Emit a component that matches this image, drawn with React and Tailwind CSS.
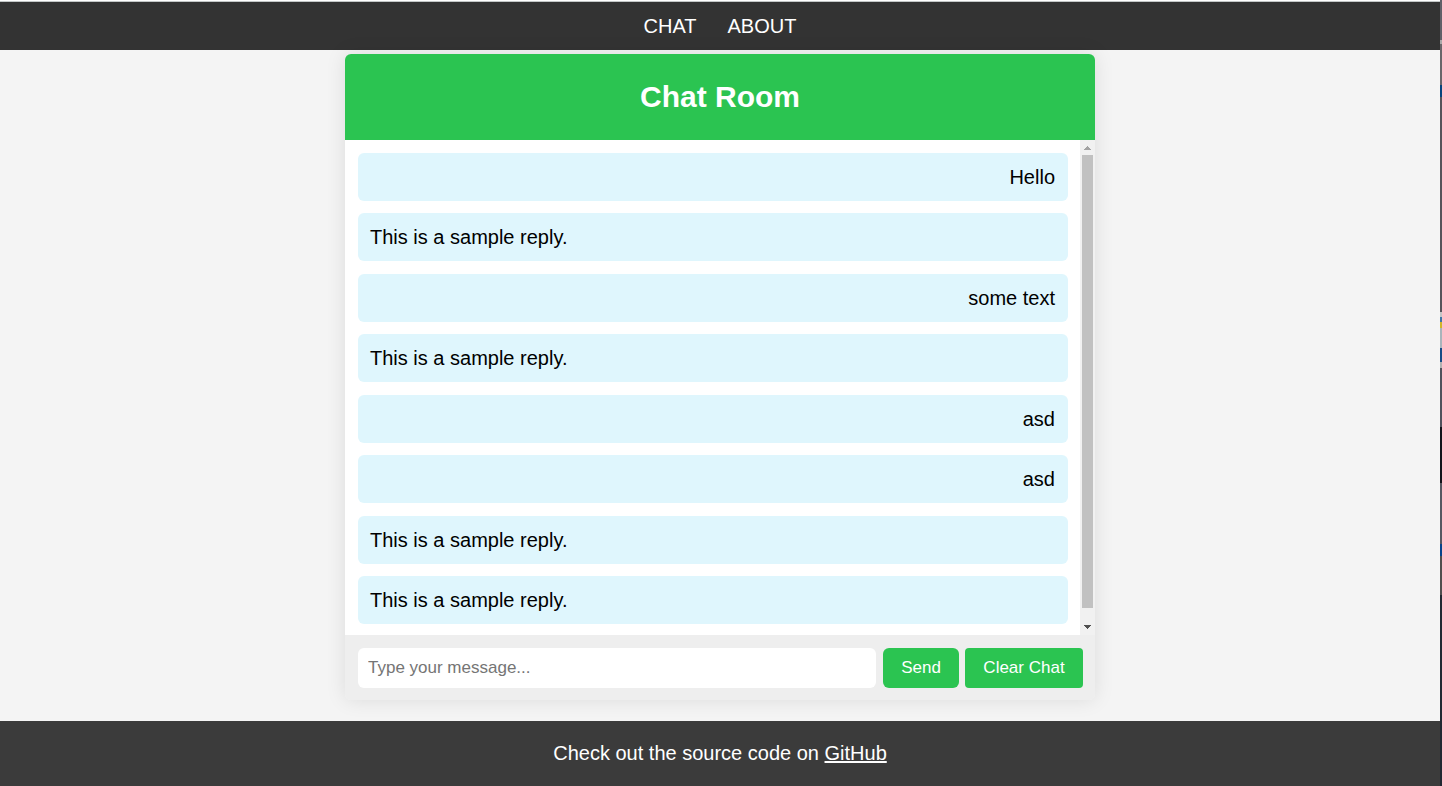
import React from "react";

const messages = [
  { text: "Hello", own: true },
  { text: "This is a sample reply.", own: false },
  { text: "some text", own: true },
  { text: "This is a sample reply.", own: false },
  { text: "asd", own: true },
  { text: "asd", own: true },
  { text: "This is a sample reply.", own: false },
  { text: "This is a sample reply.", own: false },
];

function Navigation() {
  return (
    <nav className="flex h-12 shrink-0 items-center justify-center gap-[31px] bg-[#333333] text-xl text-white">
      <a href="#chat">CHAT</a>
      <a href="#about">ABOUT</a>
    </nav>
  );
}

function ScrollTrack() {
  return (
    <div className="flex w-[15px] shrink-0 flex-col items-center bg-[#f1f1f1]" aria-hidden="true">
      <svg className="h-[15px] w-[15px] shrink-0" viewBox="0 0 15 15" shapeRendering="crispEdges">
        <path d="M7 6h1v1h1v1h1v1h1v1H4V9h1V8h1V7h1z" fill="#a3a3a3" />
      </svg>
      <div className="w-[11px] grow bg-[#c1c1c1]" />
      <div className="h-3 shrink-0" />
      <svg className="h-[15px] w-[15px] shrink-0" viewBox="0 0 15 15" shapeRendering="crispEdges">
        <path d="M4 5h7v1h-1v1H9v1H8v1H7V8H6V7H5V6H4z" fill="#505050" />
      </svg>
    </div>
  );
}

function MessageList() {
  return (
    <div className="flex h-[495px] bg-white">
      <ul className="flex grow flex-col justify-between pt-[13px] pr-3 pb-[11px] pl-[13px]">
        {messages.map((message, index) => (
          <li
            key={index}
            className={`rounded-md bg-[#dff6fd] py-[9px] pr-[13px] pl-3 text-xl leading-[30px] text-black ${
              message.own ? "text-right" : "text-left"
            }`}
          >
            {message.text}
          </li>
        ))}
      </ul>
      <ScrollTrack />
    </div>
  );
}

function Composer() {
  return (
    <form
      className="flex gap-[6px] bg-[#eeeeee] pt-[13px] pr-3 pb-3 pl-[13px] text-[17px]"
      onSubmit={(event) => event.preventDefault()}
    >
      <input
        type="text"
        aria-label="Message"
        placeholder="Type your message..."
        className="mr-px h-10 min-w-0 grow rounded-md bg-white px-[10px] text-black outline-none placeholder:text-[#757575]"
      />
      <button type="submit" className="h-10 w-[76px] shrink-0 rounded-md bg-[#2bc451] text-white">
        Send
      </button>
      <button type="button" className="h-10 w-[118px] shrink-0 rounded bg-[#2bc451] text-white">
        Clear Chat
      </button>
    </form>
  );
}

function DesktopEdge() {
  return (
    <div className="flex w-[2px] shrink-0 flex-col bg-[#45464d]" aria-hidden="true">
      <div className="h-10 bg-[#606068]" />
      <div className="h-1 bg-[#a8a8a8]" />
      <div className="h-[41px] bg-[#69666a]" />
      <div className="h-3 bg-[#07447d]" />
      <div className="h-[215px] bg-[#56535a]" />
      <div className="h-[5px] bg-[#c4c5c6]" />
      <div className="h-[5px] bg-[#3f75a4]" />
      <div className="h-[6px] bg-[#d1b629]" />
      <div className="h-5 bg-[#a9b4bb]" />
      <div className="h-[14px] bg-[#174b86]" />
      <div className="h-[6px] bg-[#b1b1b1]" />
      <div className="h-[59px] bg-[#50515c]" />
      <div className="h-14 bg-[#12131a]" />
      <div className="h-[61px] bg-[#565761]" />
      <div className="h-3 bg-[#07438b]" />
      <div className="h-[39px] bg-[#514e4e]" />
      <div className="grow bg-[#222832]" />
    </div>
  );
}

export default function App() {
  return (
    <div className="flex min-h-screen font-['Liberation_Sans',Arial,sans-serif]">
      <div className="flex min-w-0 grow flex-col border-t border-white bg-[#f4f4f4]">
        <div className="h-px shrink-0 bg-[#c3c7c7]" />
        <Navigation />
        <main className="flex grow flex-col items-center px-4 pt-1 pb-[21px]">
          <section className="w-full max-w-[750px] overflow-hidden rounded-md shadow-[0_0_20px_rgba(0,0,0,0.1)]">
            <h1 className="bg-[#2bc451] py-[25px] text-center text-3xl leading-9 font-bold text-white">
              Chat Room
            </h1>
            <MessageList />
            <Composer />
          </section>
        </main>
        <footer className="shrink-0 bg-[#3b3b3b] pt-[18px] pb-[19px] text-center text-xl text-white">
          <p>
            Check out the source code on{" "}
            <a href="https://github.com" className="underline">
              GitHub
            </a>
          </p>
        </footer>
      </div>
      <DesktopEdge />
    </div>
  );
}
